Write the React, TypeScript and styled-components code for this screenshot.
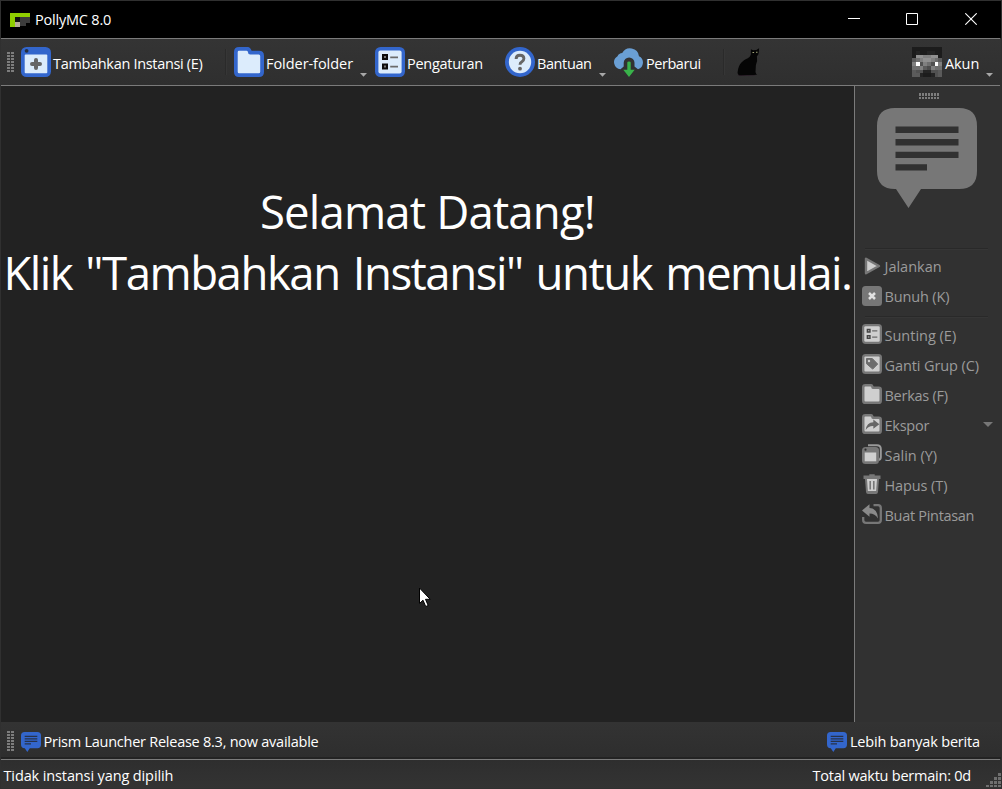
import React from "react";
import styled, { createGlobalStyle } from "styled-components";

const GlobalStyle = createGlobalStyle`
  * { box-sizing: border-box; }
  body { margin: 0; background: #2b2b2b; overflow: hidden; }
  svg { display: block; flex: none; }
`;

const Window = styled.div`
  width: 1002px;
  height: 789px;
  display: flex;
  flex-direction: column;
  border: 1px solid #303030;
  background: #313131;
  color: #fff;
  font-family: "Open Sans", "Noto Sans", sans-serif;
  font-size: 14.5px;
  line-height: 20px;
  white-space: nowrap;
  cursor: default;
`;

const TitleBar = styled.header`
  height: 37px;
  flex: none;
  display: flex;
  align-items: center;
  padding: 0 24px 0 9px;
  background: #000;
`;

const WindowControls = styled.div`
  margin-left: auto;
  padding-bottom: 2px;
  display: grid;
  grid-template-columns: 58px 59px 12px;
`;

const Rule = styled.div`
  height: 1px;
  flex: none;
  margin-right: 1px;
  background: #7b7b7b;
`;

const Label = styled.span<{ $track?: number; $drop?: number }>`
  padding-top: ${(p) => (p.$drop ?? 0) * 2}px;
  letter-spacing: ${(p) => p.$track ?? 0}px;
`;

const AppName = styled(Label)`
  margin-left: 5px;
`;

const Toolbar = styled.nav`
  height: 46px;
  flex: none;
  display: flex;
  align-items: center;
  padding: 0 8px 0 6px;
  background: linear-gradient(#343434, #2f2f2f);
`;

const ToolButton = styled.div<{ $width: number }>`
  width: ${(p) => p.$width}px;
  height: 30px;
  flex: none;
  display: flex;
  align-items: center;
  gap: 2px;
`;

const SpacedButton = styled(ToolButton)`
  padding-left: 8px;
`;

const DropMark = styled.svg`
  align-self: flex-end;
  margin: 0 0 0 auto;
`;

const ToolSeparator = styled.div`
  width: 1px;
  height: 26px;
  flex: none;
  margin: 0 8px 0 0;
  background: #2a2a2a;
  box-shadow: 1px 0 #363636;
`;

const CatSlot = styled.div`
  width: 30px;
  margin-left: 3px;
`;

const Account = styled.div`
  margin-left: auto;
  width: 81px;
  height: 30px;
  display: flex;
  align-items: center;
  gap: 3px;
`;

const VerticalGrip = styled.svg`
  margin-right: 7px;
`;

const HorizontalGrip = styled.svg`
  margin-left: 5px;
`;

const Body = styled.div`
  height: 636px;
  flex: none;
  display: flex;
`;

const Welcome = styled.main`
  width: 853px;
  flex: none;
  padding-top: 95px;
  background: #222;
  text-align: center;
  font-size: 45.6px;
  font-weight: 370;
  line-height: 61px;
`;

const WelcomeLine = styled.div<{ $track: number; $wordGap?: number }>`
  letter-spacing: ${(p) => p.$track}px;
  word-spacing: ${(p) => p.$wordGap ?? 0}px;
`;

const SidePanel = styled.aside`
  flex: 1;
  display: flex;
  flex-direction: column;
  align-items: flex-start;
  padding-left: 7px;
  border-left: 1px solid #7b7b7b;
  background: #313131;
  color: #9b9b9b;
`;

const PanelHead = styled.div`
  width: 130px;
  height: 162px;
  display: flex;
  flex-direction: column;
  align-items: center;
  gap: 9px;
  padding: 7px 0 0 0;
`;

const PanelSeparator = styled.div`
  width: 123px;
  height: 1px;
  margin: 0 0 0 3px;
  background: #292929;
  box-shadow: 0 1px #363636;
`;

const ActionGroup = styled.div`
  padding: 2px 0 5px;
`;

const Action = styled.div`
  width: 131px;
  height: 30px;
  display: flex;
  align-items: center;
  gap: 2.5px;
`;

const SubmenuMark = styled.svg`
  margin-left: auto;
`;

const NewsBar = styled.section`
  height: 37px;
  flex: none;
  display: flex;
  align-items: center;
  padding: 2px 21px 0 6px;
  background: linear-gradient(#333, #2e2e2e 35px, #232323 35px);
`;

const NewsLink = styled.div`
  display: flex;
  align-items: center;
  gap: 2.5px;
`;

const MoreNews = styled(NewsLink)`
  margin-left: auto;
`;

const StatusBar = styled.footer`
  flex: 1;
  display: flex;
  align-items: center;
  padding: 3px 0 0 2.5px;
  background: linear-gradient(#2e2e2e, #333);
`;

const PlayTime = styled(Label)`
  margin-left: auto;
`;

const ResizeGrip = styled.svg`
  align-self: flex-end;
  margin-left: 15px;
`;

const Pointer = styled.svg`
  position: absolute;
  left: 419px;
  top: 587px;
`;

const range = (n: number) => Array.from({ length: n }, (_, i) => i);

const BarGrip = () => (
  <VerticalGrip width="7" height="21" viewBox="0 0 7 21" shapeRendering="crispEdges">
    {range(7).map((i) => (
      <path key={i} d={`M0 ${i * 3}h3v2H0zM4 ${i * 3}h3v2H4z`} fill="#7d7d7d" />
    ))}
  </VerticalGrip>
);

const PanelGrip = () => (
  <HorizontalGrip width="21" height="6" viewBox="0 0 21 6" shapeRendering="crispEdges">
    {range(7).map((i) => (
      <path key={i} d={`M${i * 3} 0h2v3h-2zM${i * 3} 4h2v2h-2z`} fill="#7d7d7d" />
    ))}
  </HorizontalGrip>
);

const Logo = () => (
  <svg width="20" height="14" viewBox="0 0 20 14" shapeRendering="crispEdges">
    <path d="M0 0h20v4H5v10H0z" fill="#8fce00" />
    <path d="M10 4h10v6h-4v3h-6z" fill="#3c3c3c" />
    <path d="M5 9h5v5H5z" fill="#b7ad98" />
    <path d="M5 4h5v5H5z" fill="#111" />
  </svg>
);

const AddIcon = () => (
  <svg width="30" height="30" viewBox="0 0 30 30">
    <rect width="30" height="30" rx="5.5" fill="#3366cc" />
    <rect x="3.7" y="7.5" width="22.6" height="18.8" rx="1" fill="#dcecfc" />
    <circle cx="5.6" cy="3.8" r="1.9" fill="#27303f" />
    <path d="M15 13v8M11 17h8" stroke="#666" strokeWidth="4" strokeLinecap="round" />
  </svg>
);

const folderOuter = "M5 0h9q2 0 3.6 3.7H25q5 0 5 5V25q0 5-5 5H5q-5 0-5-5V5q0-5 5-5z";
const folderInner =
  "M5 3.8h7.6q1.4 0 1.4 1.5 0 2.2 2.2 2.2h8.6q1.4 0 1.4 1.5v15.8q0 1.5-1.5 1.5H5.2q-1.5 0-1.5-1.5V5.2q0-1.4 1.3-1.4z";

interface FolderIconProps {
  size?: number;
  rim?: string;
  fill?: string;
  children?: React.ReactNode;
}

const FolderIcon = ({ size = 30, rim = "#3366cc", fill = "#dcecfc", children }: FolderIconProps) => (
  <svg width={size} height={size} viewBox="0 0 30 30">
    <path d={folderOuter} fill={rim} />
    <path d={folderInner} fill={fill} />
    {children}
  </svg>
);

interface SettingsIconProps {
  size?: number;
  rim?: string;
  fill?: string;
  box?: string;
  dot?: string;
}

const SettingsIcon = ({
  size = 30,
  rim = "#3366cc",
  fill = "#dcecfc",
  box = "#0c0c0c",
  dot = "#777",
}: SettingsIconProps) => (
  <svg width={size} height={size} viewBox="0 0 30 30">
    <rect width="30" height="30" rx="5.5" fill={rim} />
    <rect x="3.4" y="3.4" width="23.2" height="23.2" rx="2" fill={fill} />
    <path d="M8 8h4v4H8zM8 17.500h4v4H8z" fill={dot} stroke={box} strokeWidth="2" />
    <path d="M15.2 10.3H23M15.2 19.6H23" stroke="#6b6b6b" strokeWidth="1.8" />
  </svg>
);

const HelpIcon = () => (
  <svg width="30" height="30" viewBox="0 0 30 30">
    <circle cx="15" cy="15" r="15" fill="#3366cc" />
    <circle cx="15" cy="15" r="11.2" fill="#dcecfc" />
    <path d="M11.1 12q0-3.8 3.9-3.8t3.9 3.4q0 1.900-2 3.100-1.900 1.100-1.900 3.100" fill="none" stroke="#666" strokeWidth="2.9" />
    <circle cx="15" cy="21.7" r="1.9" fill="#666" />
  </svg>
);

const UpdateIcon = () => (
  <svg width="30" height="30" viewBox="0 0 30 30">
    <path
      d="M6.500 22.200A7 7 0 0 1 3.500 9.200 5.500 5.500 0 0 1 8.200 6 9 9 0 0 1 25 9.200 7 7 0 0 1 24 22.200L20.500 19.500V15.800a5.400 5.400 0 0 0-10.800 0V19.500z"
      fill="#6a9fd4"
    />
    <path d="M13.3 15.500q0-1 1.700-1t1.700 1v7.300h4L15 30l-5.700-7.200h4z" fill="#39b34a" />
  </svg>
);

const CatIcon = () => (
  <svg width="30" height="30" viewBox="0 0 30 30">
    <path d="M3 27.500q3-1.600 6-1l11 .300q2.500 1.400-1.500 1.700l-11 .400Q1.500 29 3 27.500z" fill="#2a1d28" />
    <path
      d="M15.900 2.200L18.100 3.200 21.300 2.900 24.100 1.200 23.800 5.500Q23.600 8 21.900 9 22.800 14 20.900 18L20.500 25Q20.800 27.300 22.300 27.600L18.800 28 11.300 28 4.300 28.200Q1.800 27.200 2.900 23.500C3.800 17 7.800 13.500 12.300 11.500Q15.300 10 15.900 7.500z"
      fill="#050505"
    />
    <path d="M17.500 5h1.600v1h-1.600zM21 4.700h1.500v1h-1.500z" fill="#a3a678" />
  </svg>
);

const faceRows = [
  "11111111",
  "12112211",
  "18877881",
  "56788765",
  "7F4764F7",
  "66753766",
  "54422445",
  "55211245",
];

const faceShades: Record<string, string> = {
  "1": "#1c1c1c",
  "2": "#242424",
  "3": "#4b4b4b",
  "4": "#515151",
  "5": "#5b5b5b",
  "6": "#6e6e6e",
  "7": "#808080",
  "8": "#909090",
  F: "#ffffff",
};

const FaceIcon = () => (
  <svg width="30" height="30" viewBox="0 0 8 8" shapeRendering="crispEdges">
    {faceRows.flatMap((row, y) =>
      row.split("").map((shade, x) => (
        <rect key={`${x}-${y}`} x={x} y={y} width="1" height="1" fill={faceShades[shade]} />
      )),
    )}
  </svg>
);

const NewsIcon = ({ size, fill, line }: { size: number; fill: string; line: string }) => (
  <svg width={size} height={size} viewBox="0 0 100 100">
    <path d="M18 0H82Q100 0 100 18V63Q100 81 82 81H44L31.500 100 19 81H18Q0 81 0 63V18Q0 0 18 0z" fill={fill} />
    <path d="M18.500 21.700H81.500M18.500 34.300H81.500M18.500 46.900H81.500M18.500 59.400H50" stroke={line} strokeWidth="6.400" />
  </svg>
);

const PlayIcon = () => (
  <svg width="20" height="20" viewBox="0 0 20 20">
    <path d="M4 2.700v14.600L17 10z" fill="#cfcfcf" stroke="#777" strokeWidth="2.400" strokeLinejoin="round" />
  </svg>
);

const KillIcon = () => (
  <svg width="20" height="20" viewBox="0 0 20 20">
    <rect width="20" height="20" rx="3.500" fill="#777" />
    <path d="M7 7l6 6M13 7l-6 6" stroke="#e2e2e2" strokeWidth="2.500" />
  </svg>
);

const TagIcon = () => (
  <svg width="20" height="20" viewBox="0 0 20 20">
    <rect width="20" height="20" rx="3.500" fill="#777" />
    <rect x="2.400" y="2.400" width="15.200" height="15.200" rx="1" fill="#cfcfcf" />
    <path d="M4.500 4.500h5.800l5.400 5.600-5 5L4.500 9.700z" fill="#6d6d6d" stroke="#6d6d6d" strokeLinejoin="round" />
    <circle cx="7" cy="7" r="1.200" fill="#cfcfcf" />
  </svg>
);

const CopyIcon = () => (
  <svg width="20" height="20" viewBox="0 0 20 20">
    <path d="M6 1.200h9q3.800 0 3.800 3.800V13q0 2.500-2.300 3" fill="none" stroke="#999" strokeWidth="2" />
    <rect y="3" width="17" height="17" rx="3.500" fill="#777" />
    <rect x="2.700" y="8.500" width="11.500" height="8.800" fill="#cfcfcf" />
    <circle cx="3.500" cy="5.700" r="1.100" fill="#2f2f2f" />
  </svg>
);

const TrashIcon = () => (
  <svg width="20" height="20" viewBox="0 0 20 20">
    <path d="M1.500 1.500h5.800V.300h5.400v1.200h5.800V5H17l-1 13q-.200 2-2 2H6q-1.800 0-2-2L3 5H1.500z" fill="#777" />
    <path d="M5 5h10l-.900 12H5.900z" fill="#cfcfcf" />
    <path d="M8.200 7v8.500M11.800 7v8.500" stroke="#777" strokeWidth="1.600" />
  </svg>
);

const ShortcutIcon = () => (
  <svg width="20" height="20" viewBox="0 0 20 20">
    <path d="M11.500 1.200H16q2.800 0 2.800 2.800V16q0 2.800-2.800 2.800H4q-2.800 0-2.800-2.800V13" fill="none" stroke="#777" strokeWidth="2.300" />
    <path d="M0 6.500L7.500.300V4Q15.500 4.500 16 14.500 13 9.500 7.500 9.500V12.800z" fill="#8a8a8a" />
  </svg>
);

const grey = { rim: "#777", fill: "#cfcfcf" };

const ExportIcon = () => (
  <FolderIcon size={20} {...grey}>
    <path d="M5.500 24Q7 13 17 12.500V8.200L26 15.200 17 22V18Q10 17.500 5.500 24z" fill="#666" />
  </FolderIcon>
);

const DropArrow = () => (
  <DropMark width="7" height="5" viewBox="0 0 7 5">
    <path d="M0 1h7L3.500 4.800z" fill="#a8a8a8" />
  </DropMark>
);

type ActionItem = [icon: React.ReactNode, text: string, track: number];

const runActions: ActionItem[] = [
  [<PlayIcon />, "Jalankan", 0],
  [<KillIcon />, "Bunuh (K)", -0.15],
];

const instanceActions: ActionItem[] = [
  [<SettingsIcon size={20} {...grey} box="#444" dot="#999" />, "Sunting (E)", 0],
  [<TagIcon />, "Ganti Grup (C)", -0.1],
  [<FolderIcon size={20} {...grey} />, "Berkas (F)", -0.25],
  [<ExportIcon />, "Ekspor", -0.25],
  [<CopyIcon />, "Salin (Y)", 0],
  [<TrashIcon />, "Hapus (T)", -0.1],
  [<ShortcutIcon />, "Buat Pintasan", -0.3],
];

const ActionList = ({ items, drop }: { items: ActionItem[]; drop: number }) => (
  <ActionGroup>
    {items.map(([icon, text, track]) => (
      <Action key={text}>
        {icon}
        <Label $track={track} $drop={drop}>{text}</Label>
        {text === "Ekspor" && (
          <SubmenuMark width="10" height="6" viewBox="0 0 10 6">
            <path d="M0 1h10L5 6z" fill="#777" />
          </SubmenuMark>
        )}
      </Action>
    ))}
  </ActionGroup>
);

export default function App() {
  return (
    <Window>
      <GlobalStyle />
      <TitleBar>
        <Logo />
        <AppName $track={-0.2}>PollyMC 8.0</AppName>
        <WindowControls>
          <svg width="12" height="12" viewBox="0 0 12 12"><path d="M0 5.500h12" stroke="#fff" /></svg>
          <svg width="12" height="12" viewBox="0 0 12 12"><path d="M.5.500h11v11H.500z" fill="none" stroke="#fff" /></svg>
          <svg width="12" height="12" viewBox="0 0 12 12"><path d="M.3.300l11.400 11.400M11.700.300L.300 11.700" stroke="#fff" strokeWidth="1.100" /></svg>
        </WindowControls>
      </TitleBar>
      <Rule />
      <Toolbar>
        <BarGrip />
        <ToolButton $width={204}>
          <AddIcon />
          <Label $track={-0.32} $drop={2}>Tambahkan Instansi (E)</Label>
        </ToolButton>
        <ToolSeparator />
        <ToolButton $width={133}>
          <FolderIcon />
          <Label $track={-0.05} $drop={2}>Folder-folder</Label>
          <DropArrow />
        </ToolButton>
        <SpacedButton $width={138}>
          <SettingsIcon />
          <Label $track={-0.28} $drop={2}>Pengaturan</Label>
        </SpacedButton>
        <ToolButton $width={101}>
          <HelpIcon />
          <Label $track={-0.4} $drop={2}>Bantuan</Label>
          <DropArrow />
        </ToolButton>
        <SpacedButton $width={117}>
          <UpdateIcon />
          <Label $track={-0.45} $drop={2}>Perbarui</Label>
        </SpacedButton>
        <ToolSeparator />
        <CatSlot>
          <CatIcon />
        </CatSlot>
        <Account>
          <FaceIcon />
          <Label $track={-0.1} $drop={2}>Akun</Label>
          <DropArrow />
        </Account>
      </Toolbar>
      <Rule />
      <Body>
        <Welcome>
          <WelcomeLine $track={-0.85}>Selamat Datang!</WelcomeLine>
          <WelcomeLine $track={-1.5} $wordGap={2.7}>Klik "Tambahkan Instansi" untuk memulai.</WelcomeLine>
        </Welcome>
        <SidePanel>
          <PanelHead>
            <PanelGrip />
            <NewsIcon size={100} fill="#777" line="#313131" />
          </PanelHead>
          <PanelSeparator />
          <ActionList items={runActions} drop={1} />
          <PanelSeparator />
          <ActionList items={instanceActions} drop={2} />
        </SidePanel>
      </Body>
      <NewsBar>
        <BarGrip />
        <NewsLink>
          <NewsIcon size={20} fill="#3366cc" line="#27324a" />
          <Label $track={-0.25}>Prism Launcher Release 8.3, now available</Label>
        </NewsLink>
        <MoreNews>
          <NewsIcon size={20} fill="#3366cc" line="#27324a" />
          <Label $track={-0.17}>Lebih banyak berita</Label>
        </MoreNews>
      </NewsBar>
      <Rule />
      <StatusBar>
        <Label $track={-0.12}>Tidak instansi yang dipilih</Label>
        <PlayTime $track={-0.23}>Total waktu bermain: 0d</PlayTime>
        <ResizeGrip width="15" height="15" viewBox="0 0 15 15">
          <path
            d="M0 12h3v2H0zM4 12h3v2H4zM8 12h3v2H8zM12 12h3v2h-3zM4 8h3v3H4zM8 8h3v3H8zM12 8h3v3h-3zM8 4h3v3H8zM12 4h3v3h-3zM12 0h3v3h-3z"
            fill="#6f6f6f"
          />
        </ResizeGrip>
      </StatusBar>
      <Pointer width="12" height="21" viewBox="0 0 12 21">
        <path d="M.5 1v15.500l3.500-3.300 2.700 6.300 2.500-1-2.700-6.200h4.700z" fill="#fff" stroke="#000" />
      </Pointer>
    </Window>
  );
}
